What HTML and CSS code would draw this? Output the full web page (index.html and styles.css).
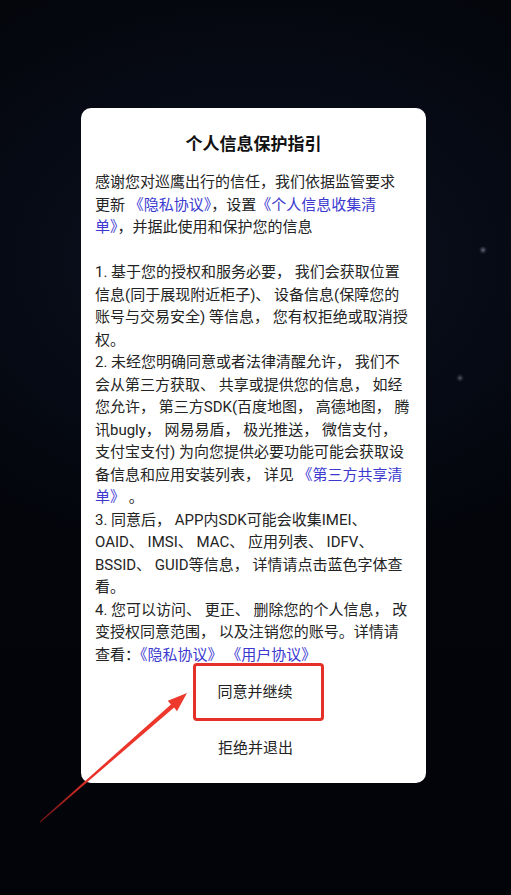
FILE: index.html
```html
<!DOCTYPE html>
<html lang="zh-CN">
<head>
<meta charset="utf-8">
<title>个人信息保护指引</title>
<link rel="stylesheet" href="styles.css">
</head>
<body>
<div class="screen">
  <div class="card">
    <h1 class="title">个人信息保护指引</h1>
    <p class="para">感谢您对巡鹰出行的信任，我们依据监管要求<br>更新 <a class="link">《隐私协议》</a>，设置<a class="link">《个人信息收集清<br>单》</a>，并据此使用和保护您的信息</p>
    <p class="para">1. 基于您的授权和服务必要， 我们会获取位置<br>信息(同于展现附近柜子)、 设备信息(保障您的<br>账号与交易安全) 等信息， 您有权拒绝或取消授<br>权。<br>2. 未经您明确同意或者法律清醒允许， 我们不<br>会从第三方获取、 共享或提供您的信息， 如经<br>您允许， 第三方SDK(百度地图， 高德地图， 腾<br>讯bugly， 网易易盾， 极光推送， 微信支付，<br>支付宝支付) 为向您提供必要功能可能会获取设<br>备信息和应用安装列表， 详见 <a class="link">《第三方共享清<br>单》</a> 。<br>3. 同意后， APP内SDK可能会收集IMEI、<br>OAID、 IMSI、 MAC、 应用列表、 IDFV、<br>BSSID、 GUID等信息， 详情请点击蓝色字体查<br>看。<br>4. 您可以访问、 更正、 删除您的个人信息， 改<br>变授权同意范围， 以及注销您的账号。详情请<br>查看：<a class="link">《隐私协议》</a> <a class="link">《用户协议》</a></p>
    <div class="actions">
      <div class="highlight"><span class="btn">同意并继续</span></div>
      <span class="btn reject">拒绝并退出</span>
    </div>
  </div>
  <svg class="arrow" width="511" height="895" viewBox="0 0 511 895">
    <defs>
      <linearGradient id="ag" x1="40" y1="822" x2="186" y2="694" gradientUnits="userSpaceOnUse">
        <stop offset="0" stop-color="#c8221c" stop-opacity="0.55"/>
        <stop offset="0.35" stop-color="#e8322a"/>
        <stop offset="1" stop-color="#ee3a2c"/>
      </linearGradient>
    </defs>
    <polygon fill="url(#ag)" points="187,693 167.8,700.8 170.9,704.4 39.7,821.6 40.3,822.4 174.1,707.6 177,711.2"/>
  </svg>
</div>
</body>
</html>
```
FILE: styles.css
```css
html, body {
  margin: 0;
  padding: 0;
}
body {
  background-color: #03050c;
  font-family: Roboto, "Noto Sans CJK SC", sans-serif;
}
.screen {
  position: relative;
  width: 511px;
  height: 895px;
  box-sizing: border-box;
  padding-top: 108px;
  padding-left: 81px;
  overflow: hidden;
  background:
    radial-gradient(circle at 483px 250px, rgba(190,200,220,0.55) 0, rgba(190,200,220,0.25) 1.5px, transparent 4px),
    radial-gradient(circle at 460px 378px, rgba(190,200,220,0.5) 0, rgba(190,200,220,0.2) 1.5px, transparent 4px),
    radial-gradient(ellipse 420px 300px at 256px 260px, #0b1220 0%, #070b16 55%, transparent 100%),
    linear-gradient(#04060c, #03050b 60%, #02040a);
}
.card {
  width: 345px;
  box-sizing: border-box;
  background: #ffffff;
  border-radius: 10px;
  padding: 24px 10px 24px 14px;
  display: flex;
  flex-direction: column;
}
.title {
  margin: 0 0 15px;
  font-size: 17px;
  line-height: 24px;
  font-weight: 700;
  color: #111111;
  text-align: center;
  padding-right: 4px;
}
.para {
  margin: 0;
  font-size: 15px;
  line-height: 22.5px;
  color: #242424;
  white-space: nowrap;
}
.para + .para {
  margin-top: 22.5px;
}
.link {
  color: #3b39d0;
  text-decoration: none;
}
.actions {
  display: flex;
  flex-direction: column;
  align-items: center;
}
.highlight {
  margin-top: -3px;
  margin-left: 6px;
  width: 131px;
  height: 58px;
  box-sizing: border-box;
  padding-right: 7px;
  border: 3px solid #e3312a;
  border-radius: 4px;
  display: flex;
  align-items: center;
  justify-content: center;
}
.btn {
  font-size: 15px;
  line-height: 22px;
  color: #222222;
}
.reject {
  margin-top: 16px;
}
.arrow {
  position: absolute;
  left: 0;
  top: 0;
  pointer-events: none;
}
```
